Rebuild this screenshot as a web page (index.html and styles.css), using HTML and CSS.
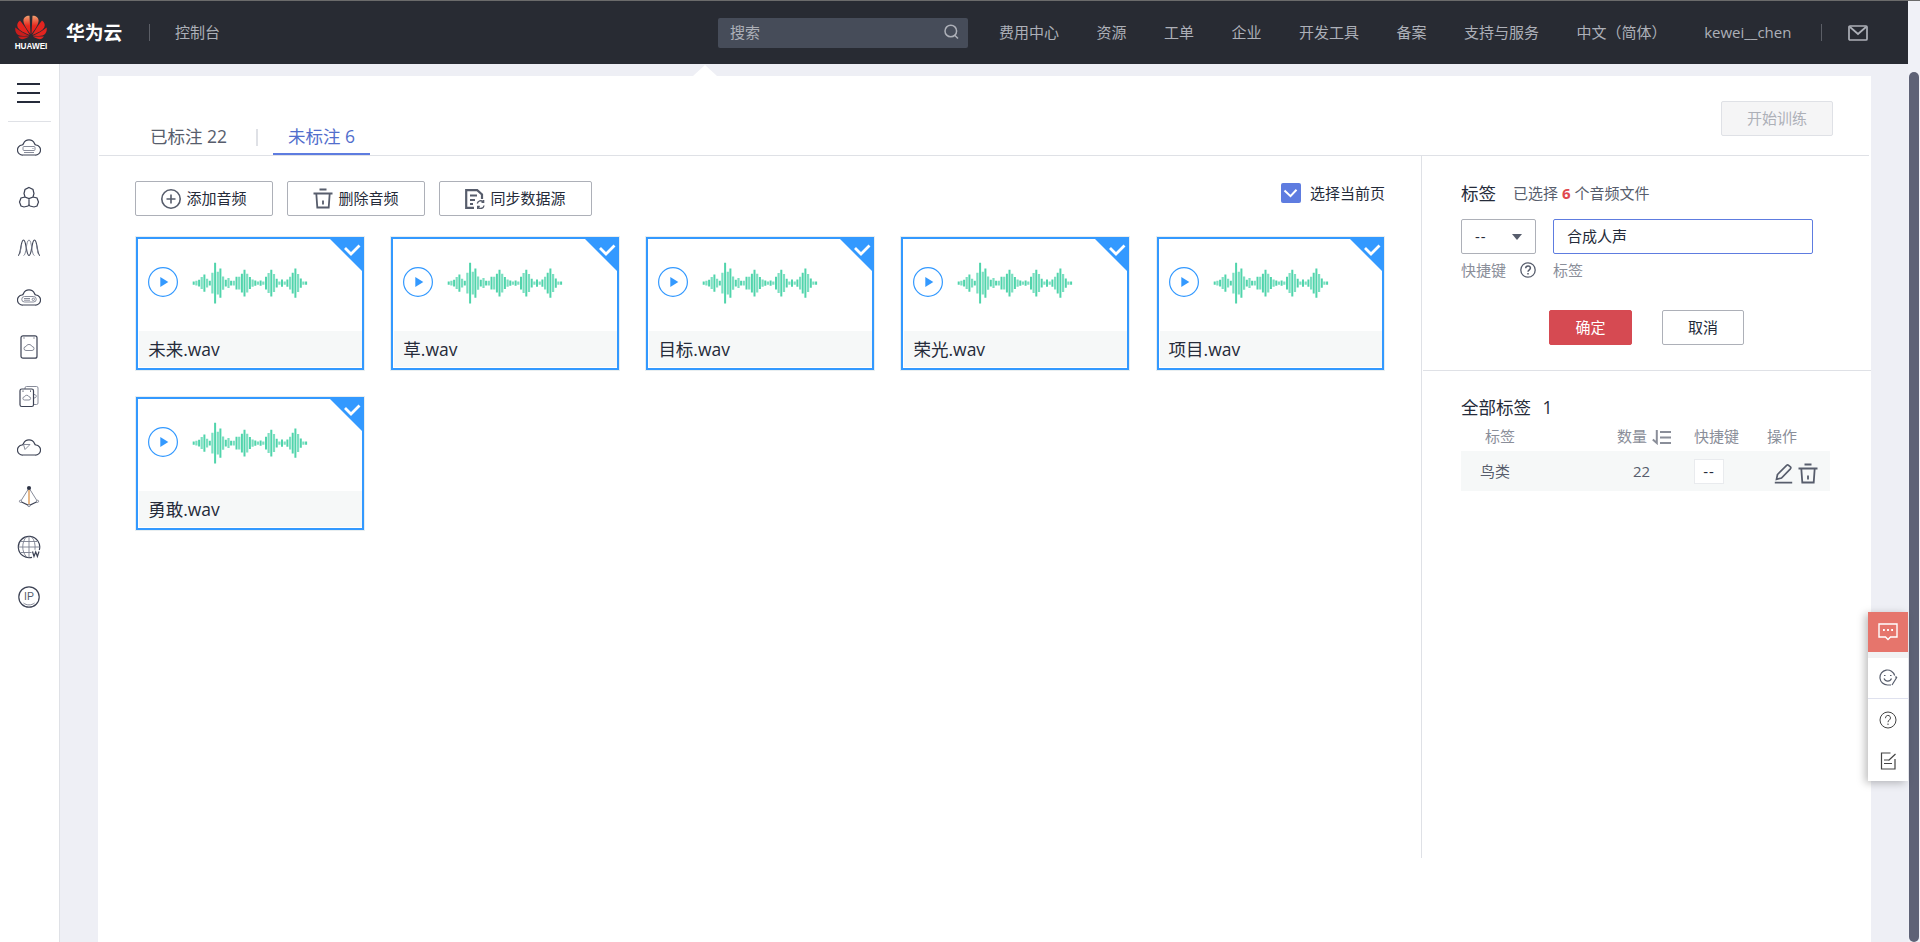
FILE: index.html
```html
<!DOCTYPE html>
<html lang="zh-CN">
<head>
    <meta charset="UTF-8">
    <meta name="viewport" content="width=device-width, initial-scale=1.0">
    <title>华为云 - 音频标注</title>
    <link rel="stylesheet" href="styles.css">
</head>
<body>

<!-- Shared icons -->
<svg class="defs" width="0" height="0">
    <symbol id="wave" viewBox="0 0 116 44">
        <path class="wave-light" d="M4.400 19.700v4.700M9.700 16v12M15.100 17.700v8.700M20.400 11.700v20.700M25.800 10.700v22.700M31.100 15.400v13.300M36.500 17v10M41.800 19.700v4.700M47.200 15.700v12.700M55.200 12.700v18.700M60.600 18.400v7.300M65.900 20.400v3.300M71.300 20.400v3.300M76.600 12v20M82 13v18M87.400 20.400v3.300M92.700 20.400v3.300M98.100 15.700v12.700M106.100 13v18M111.400 20.400v3.300"/>
        <path class="wave-dark" d="M1.700 20.400v3.300M7.100 18.700v6.700M12.400 13.400v17.300M17.800 19.700v4.700M23.100 1.700v40.700M28.400 7.400v29.300M33.800 18.700v6.700M39.100 19.700v4.700M44.500 15.700v12.700M49.900 12.700v18.700M52.500 8.700v26.700M57.900 16v12M63.300 19.400v5.300M68.600 19.400v5.300M74 15.700v12.700M79.300 8.700v26.700M84.700 17.700v8.700M90 18.400v7.300M95.400 18.400v7.300M100.700 11.700v20.700M103.400 7.400v29.300M108.800 17.400v9.300M114.100 20.400v3.300"/>
    </symbol>
    <symbol id="play" viewBox="0 0 30 30">
        <circle cx="15" cy="15" r="14.400" fill="none" stroke="#3399ff" stroke-width="1.200"/>
        <path d="M12.300 10v10l8-5z" fill="#3399ff"/>
    </symbol>
    <symbol id="check" viewBox="0 0 32 32">
        <path d="M0 0h32v32z" fill="#3399ff"/>
        <path d="M15 9l6 6 8.500-8.500" fill="none" stroke="#fff" stroke-width="2.800"/>
    </symbol>
    <symbol id="trash" viewBox="0 0 20 21">
        <path d="M6.500 1.500h7M.5 5.500h19M3.300 5.500l1 14h11.400l1-14M10 12.500v4" fill="none" stroke="#575d6c" stroke-width="1.800"/>
    </symbol>
</svg>

<div class="app">
    <div class="page">

        <!-- Top bar -->
        <header class="topbar">
            <div class="logo">
                <svg width="32" height="25" viewBox="0 0 32 25">
                    <defs>
                        <linearGradient id="petal" x1="0" y1="0" x2="0" y2="1">
                            <stop offset="0" stop-color="#f0a070"/>
                            <stop offset=".55" stop-color="#e8281e"/>
                            <stop offset="1" stop-color="#e31a18"/>
                        </linearGradient>
                    </defs>
                    <g fill="#e3241f">
                        <path fill="url(#petal)" d="M15.500 19C15 11 14.800 5 14.500.8 11.500.5 8.500 2.500 8.400 5.500c0 4 4 9.500 7.100 13.500z"/>
                        <path fill="url(#petal)" d="M16.500 19c.5-8 .7-14 1-18.200 3-.3 6 1.700 6.100 4.700 0 4-4 9.500-7.100 13.500z"/>
                        <path d="M14.800 20C11.500 14.500 8 9 5 5.500 2.400 7 1.600 10 2.800 12.500c1.600 3 7 5.500 12 7.500z"/>
                        <path d="M17.200 20c3.300-5.500 6.800-11 9.800-14.500 2.600 1.500 3.400 4.500 2.200 7-1.600 3-7 5.500-12 7.500z"/>
                        <path fill="#c91d1c" d="M14.300 20.800C9 18.500 4 15.500.4 12.500-.2 15.500.8 18.500 3.300 19.900c2.500 1.300 7 1.100 11 .9z"/>
                        <path d="M17.700 20.800c5.300-2.300 10.300-5.300 13.900-8.300.6 3-.4 6-2.900 7.400-2.500 1.300-7 1.100-11 .9z"/>
                        <path fill="#c91d1c" d="M14.200 21.600H3c1.500 2.300 4 3.100 6.300 2.200 1.700-.5 3.400-1.300 4.900-2.200z"/>
                        <path d="M17.800 21.600H29c-1.500 2.300-4 3.100-6.300 2.200-1.700-.5-3.400-1.300-4.900-2.200z"/>
                    </g>
                </svg>
                <span class="logo-text">HUAWEI</span>
            </div>
            <span class="brand">华为云</span>
            <span class="bar-divider"></span>
            <a class="console">控制台</a>
            <div class="search">
                <span>搜索</span>
                <svg width="15" height="16" viewBox="0 0 15 16" fill="none" stroke="#adb0b8" stroke-width="1.500">
                    <circle cx="6.800" cy="7" r="5.800"/>
                    <path d="M10.500 11l3.500 3.500"/>
                </svg>
            </div>
            <nav class="topnav">
                <a>费用中心</a>
                <a>资源</a>
                <a>工单</a>
                <a>企业</a>
                <a>开发工具</a>
                <a>备案</a>
                <a>支持与服务</a>
                <a>中文（简体）</a>
                <a>kewei__chen</a>
            </nav>
            <span class="bar-divider user-divider"></span>
            <svg class="mail" width="20" height="16" viewBox="0 0 20 16" fill="none" stroke="#adb0b8" stroke-width="1.700">
                <rect x="1" y="1" width="18" height="14" rx="1"/>
                <path d="M2 2l8 7 8-7"/>
            </svg>
        </header>

        <div class="body">
            <!-- Left service bar -->
            <aside class="sidebar">
                <div class="menu"><i></i><i></i><i></i></div>
                <ul>
                    <li><svg width="24" height="24" viewBox="0 0 24 24"><path d="M6 20a5 5 0 0 1-1-10c1 0 1.200-.5 1.500-1.500a6 6 0 0 1 11 0c.3 1 .5 1.500 1.500 1.500a5 5 0 0 1-1 10z"/><path class="thin" d="M7 11.500h10a1 1 0 0 1 1 1v2a1 1 0 0 1-1 1H7a1 1 0 0 1-1-1v-2a1 1 0 0 1 1-1zM7 17.500h10M15.500 13.500h1"/></svg></li>
                    <li><svg width="24" height="24" viewBox="0 0 24 24"><path d="M12 2.500l4 2 1 4-1 3.500-4 1.500L8 12 7 8.500l1-4zM8 12l-4 1-1.500 4 1.500 4 3 1 4-1 1-1.500M16 12l4 1 1.500 4-1.500 4-3 1-4-1-1-1.500v-6"/></svg></li>
                    <li><svg width="24" height="24" viewBox="0 0 24 24"><path d="M1 20.500C4 20.500 3.500 5 6.500 5S9 20.500 12 20.500M12 20.500C15 20.500 14.500 5 17.500 5S20 20.500 23 20.500"/><path class="thin" d="M3 18.500l1.500-9M6.500 20.500C9.500 20.500 9 5 12 5s2.500 15.500 5.500 15.500M21 18.500l-1.500-9"/></svg></li>
                    <li><svg width="24" height="24" viewBox="0 0 24 24"><path d="M6 20a5 5 0 0 1-1-10c1 0 1.200-.5 1.500-1.500a6 6 0 0 1 11 0c.3 1 .5 1.500 1.500 1.500a5 5 0 0 1-1 10z"/><path class="thin" d="M7.500 11.500h9a2.700 2.700 0 0 1 0 5.500h-9a2.700 2.700 0 0 1 0-5.500zM7 13.500h6M7 15.200h6"/><circle class="thin" cx="16.300" cy="14.300" r="1.200"/></svg></li>
                    <li><svg width="24" height="24" viewBox="0 0 24 24"><rect x="4" y=".8" width="16" height="22.400" rx="2"/><path class="thin" d="M9 15.500a2 2 0 0 1 0-4 3.200 3.200 0 0 1 6 0 2 2 0 0 1 0 4z"/><path d="M6.500 3h1M16.500 3h1"/></svg></li>
                    <li><svg width="24" height="24" viewBox="0 0 24 24"><path class="thin" d="M8 4V3a1.500 1.500 0 0 1 1.500-1.500h10A1.500 1.500 0 0 1 21 3v15a1.500 1.500 0 0 1-1.500 1.500H17M17 9.500c3 0 3 3.500 0 3.500"/><rect x="3" y="4" width="13.500" height="17.500" rx="1.800"/><path class="thin" d="M7.500 15a1.600 1.600 0 0 1 0-3.200 2.400 2.400 0 0 1 4.500 0 1.600 1.600 0 0 1 0 3.200z"/><path d="M5.500 6.200h1M13 6.200h1"/></svg></li>
                    <li><svg width="24" height="24" viewBox="0 0 24 24"><path d="M6 20a5 5 0 0 1-1-10c1 0 1.200-.5 1.500-1.500a6 6 0 0 1 11 0c.3 1 .5 1.500 1.500 1.500a5 5 0 0 1-1 10z"/><path class="thin" d="M6.500 9.500h6.500l-5 5z"/></svg></li>
                    <li><svg width="24" height="24" viewBox="0 0 24 24"><path class="thin" d="M12 3L3.500 16.500M12 3l8.500 13.500"/><path d="M3.500 16.500L12 20.500l8.500-4"/><path class="orange" d="M12 3v17"/><circle class="dot" cx="12" cy="3" r="1.500"/><circle class="thin white" cx="3.500" cy="16.300" r="1.100"/><circle class="thin white" cx="20.500" cy="16.300" r="1.100"/><circle class="thin white" cx="12" cy="20.600" r="1.100"/></svg></li>
                    <li><svg width="24" height="24" viewBox="0 0 24 24"><path d="M15 22.300A10.700 10.700 0 1 1 22.300 15"/><path class="thin" d="M12 1v21M1.500 12h21M3.500 6.500h16.500M3.500 17.500h11M9.500 1.800c-5 5-5 15 0 20M14.500 1.800c3 3 4 8 3.500 13"/><path d="M15.500 16.500l1.500 5 1.700-4.500 1.700 4.500 1.600-5"/></svg></li>
                    <li><svg width="24" height="24" viewBox="0 0 24 24"><circle cx="12" cy="12" r="10.200"/><path class="thin" d="M6.500 18c3 2.500 8 2.500 11 0"/><text x="12" y="15.400">IP</text></svg></li>
                </ul>
            </aside>

            <!-- Labeling page -->
            <main class="panel">
                <span class="pointer"></span>
                <div class="panel-head">
                    <div class="tabs">
                        <a class="tab">已标注 22</a>
                        <span class="tab-split"></span>
                        <a class="tab active">未标注 6</a>
                    </div>
                    <button class="btn btn-train" disabled>开始训练</button>
                </div>

                <div class="content">
                    <section class="audio">
                        <div class="toolbar">
                            <button class="btn btn-tool">
                                <svg width="20" height="20" viewBox="0 0 20 20" fill="none" stroke="#575d6c" stroke-width="1.600"><circle cx="10" cy="10" r="9.200"/><path d="M10 5.500v9M5.500 10h9"/></svg>
                                <span>添加音频</span>
                            </button>
                            <button class="btn btn-tool">
                                <svg width="20" height="21"><use href="#trash"/></svg>
                                <span>删除音频</span>
                            </button>
                            <button class="btn btn-tool btn-sync">
                                <svg width="20" height="20" viewBox="0 0 20 20" fill="none" stroke="#575d6c" stroke-width="2.200"><path d="M9 18.800H1.200V1.200h11L17 5.500V10M5 6.500h7M5 11h5M5 15h3"/><path stroke-width="1.400" d="M12.300 14.500a3.400 3.400 0 0 1 5.800-1.700M19 16.500a3.400 3.400 0 0 1-5.800 1.900M18.600 11v2.400h-2.100M12.700 19.900v-2.400h2.100"/></svg>
                                <span>同步数据源</span>
                            </button>
                            <label class="select-page">
                                <span class="checkbox"><svg width="20" height="20" viewBox="0 0 20 20"><path d="M3.500 7.500l6 5.700 6-6.500" fill="none" stroke="#fff" stroke-width="2"/></svg></span>
                                选择当前页
                            </label>
                        </div>

                        <div class="cards">
                            <div class="card">
                                <svg class="corner"><use href="#check"/></svg>
                                <div class="player"><svg class="play"><use href="#play"/></svg><svg class="wave"><use href="#wave"/></svg></div>
                                <p>未来.wav</p>
                            </div>
                            <div class="card">
                                <svg class="corner"><use href="#check"/></svg>
                                <div class="player"><svg class="play"><use href="#play"/></svg><svg class="wave"><use href="#wave"/></svg></div>
                                <p>草.wav</p>
                            </div>
                            <div class="card">
                                <svg class="corner"><use href="#check"/></svg>
                                <div class="player"><svg class="play"><use href="#play"/></svg><svg class="wave"><use href="#wave"/></svg></div>
                                <p>目标.wav</p>
                            </div>
                            <div class="card">
                                <svg class="corner"><use href="#check"/></svg>
                                <div class="player"><svg class="play"><use href="#play"/></svg><svg class="wave"><use href="#wave"/></svg></div>
                                <p>荣光.wav</p>
                            </div>
                            <div class="card">
                                <svg class="corner"><use href="#check"/></svg>
                                <div class="player"><svg class="play"><use href="#play"/></svg><svg class="wave"><use href="#wave"/></svg></div>
                                <p>项目.wav</p>
                            </div>
                            <div class="card">
                                <svg class="corner"><use href="#check"/></svg>
                                <div class="player"><svg class="play"><use href="#play"/></svg><svg class="wave"><use href="#wave"/></svg></div>
                                <p>勇敢.wav</p>
                            </div>
                        </div>
                    </section>

                    <!-- Label form and label list -->
                    <section class="labels">
                        <div class="label-form">
                            <div class="form-title">
                                <h3>标签</h3>
                                <span>已选择 <b>6</b> 个音频文件</span>
                            </div>
                            <div class="fields">
                                <div class="field-key">
                                    <div class="select"><span>--</span> <i></i></div>
                                    <div class="hint">快捷键
                                        <svg width="16" height="16" viewBox="0 0 16 16" fill="none" stroke="#575d6c" stroke-width="1.300"><circle cx="8" cy="8" r="7.200"/><path stroke-width="1.500" d="M5.700 6.300c0-3.200 4.700-3 4.700-.2C10.400 7.800 8 7.800 8 9.800M8 11v1.500"/></svg>
                                    </div>
                                </div>
                                <div class="field-name">
                                    <div class="input">合成人声</div>
                                    <div class="hint">标签</div>
                                </div>
                            </div>
                            <div class="actions">
                                <button class="btn btn-ok">确定</button>
                                <button class="btn btn-cancel">取消</button>
                            </div>
                        </div>

                        <div class="label-list">
                            <h3>全部标签 <span>1</span></h3>
                            <div class="row row-head">
                                <span class="c-name">标签</span>
                                <span class="c-count">数量
                                    <svg width="19" height="15" viewBox="0 0 19 15" fill="none" stroke="#8a8e99" stroke-width="2"><path d="M4.800 0v13L.8 9.500M8 2h11M8 7.500h11M8 13h11"/></svg>
                                </span>
                                <span class="c-key">快捷键</span>
                                <span class="c-op">操作</span>
                            </div>
                            <div class="row row-item">
                                <span class="c-name">鸟类</span>
                                <span class="c-count">22</span>
                                <span class="c-key"><em>--</em></span>
                                <span class="c-op">
                                    <svg width="19" height="21" viewBox="0 0 19 21" fill="none" stroke="#575d6c" stroke-width="1.700"><path d="M.8 19.700h17.400M3.500 11.500L12.600 2.300q1-.8 2 0l1.800 1.500q.9 1 0 2L7.500 15l-5 1.300z"/></svg>
                                    <svg width="20" height="21"><use href="#trash"/></svg>
                                </span>
                            </div>
                        </div>
                    </section>
                </div>
            </main>
        </div>
    </div>

    <!-- Scrollbar -->
    <div class="scrollbar"><div class="thumb"></div></div>
</div>

<!-- Floating help -->
<div class="float-help">
    <div class="chat">
        <svg width="20" height="18" viewBox="0 0 20 18" fill="none" stroke="#fff" stroke-width="1.400"><path d="M1 1h18v13h-6.500L10 16.500 7.500 14H1z"/><path stroke-width="1.800" d="M5 7h1.800M9.100 7h1.800M13.200 7H15"/></svg>
    </div>
    <div class="smile">
        <svg width="19" height="18" viewBox="0 0 19 18" fill="none" stroke="#575d6c" stroke-width="1.200"><path d="M12 16H8.500A7.500 7.500 0 1 1 15.700 6.500M18 8l-5 8M16 8h2M5 9.500c1.500 3.500 6 3.500 7.500 0M5 6.500h1.500M11 6.500h1.500"/></svg>
    </div>
    <div class="tip">
        <svg width="18" height="18" viewBox="0 0 18 18" fill="none" stroke="#444" stroke-width="1"><circle cx="9" cy="9" r="8"/><path d="M6.500 7.200c0-3.800 5-3.500 5-.3C11.500 9 9 9 9 11.200M9 12.500V14"/></svg>
    </div>
    <div class="tip">
        <svg width="17" height="18" viewBox="0 0 17 18" fill="none" stroke="#444" stroke-width="1.200"><path d="M10.500 1H1.500v16h13.500V7M4 8h4.500M4 11.500h8M8.500 8.500L15.500 2"/></svg>
    </div>
</div>

</body>
</html>
```
FILE: styles.css
```css
* {
    box-sizing: border-box;
}

body {
    font-family: 'Open Sans', 'Noto Sans CJK SC', sans-serif;
    font-size: 15px;
    font-weight: 380;
    line-height: 20px;
    background-color: #eeeff5;
    color: #252b3a;
    margin: 0;
    overflow: hidden;
}

h3, p, ul {
    margin: 0;
    padding: 0;
    font-weight: inherit;
}

svg {
    flex: none;
    display: block;
}

.defs {
    position: absolute;
}

.app {
    display: flex;
    height: 942px;
    border-top: 1px solid #6b6b6b;
}

.page {
    flex: 1;
    display: flex;
    flex-direction: column;
}

/* Top bar */
.topbar {
    height: 63px;
    background-color: #282b33;
    color: #adb0b8;
    display: flex;
    align-items: center;
    padding-left: 15px;
    flex: none;
}

.logo {
    width: 32px;
    height: 36px;
    display: flex;
    flex-direction: column;
    align-items: center;
}

.logo-text {
    font: bold 8.2px/9px 'Liberation Sans', sans-serif;
    color: #fff;
    margin-top: 2px;
}

.brand {
    font-size: 18.75px;
    font-weight: bold;
    color: #fff;
    margin-left: 19px;
    width: 57px;
}

.bar-divider {
    width: 1px;
    height: 17px;
    background-color: #5b5e66;
    margin-left: 26px;
}

.console {
    margin-left: 25px;
    width: 45px;
    padding-bottom: 2px;
}

.search {
    width: 250px;
    height: 30px;
    margin-left: 498px;
    background-color: #464c59;
    border-radius: 2px;
    padding: 0 9px 2px 12px;
    display: flex;
    align-items: center;
    justify-content: space-between;
}

.topnav {
    display: flex;
    gap: 37.5px;
    margin-left: 31px;
    padding-bottom: 2px;
    width: 790px;
    white-space: nowrap;
}

.user-divider {
    margin-left: 32px;
}

.mail {
    margin-left: 26px;
}

.body {
    flex: 1;
    display: flex;
    min-height: 0;
}

/* Service bar */
.sidebar {
    width: 60px;
    background-color: #fff;
    border-right: 1px solid #dfe1e6;
    padding: 19px 8px 0;
}

.menu {
    height: 39px;
    padding-left: 9px;
    border-bottom: 1px solid #dfe1e6;
    display: flex;
    flex-direction: column;
    gap: 7px;
}

.menu i {
    width: 23px;
    height: 2px;
    background-color: #252b3a;
}

.sidebar ul {
    list-style: none;
    padding-top: 13px;
}

.sidebar li {
    height: 50px;
    padding-left: 9px;
}

.sidebar li svg {
    fill: none;
    stroke: #3c4254;
    stroke-width: 1.2;
}

.sidebar .thin {
    stroke: #7a7f8e;
    stroke-width: 0.9;
}

.sidebar .white {
    fill: #fff;
}

.sidebar .dot {
    fill: #252b3a;
}

.sidebar .orange {
    stroke: #d98a3a;
    stroke-width: 1.2;
}

.sidebar text {
    font: 10.5px 'Liberation Sans', sans-serif;
    text-anchor: middle;
    fill: #575d6c;
    stroke: none;
}

/* Main panel */
.panel {
    position: relative;
    width: 1773px;
    margin: 12px 0 0 38px;
    background-color: #fff;
}

.pointer {
    position: absolute;
    left: 595px;
    top: -11px;
    border: 12px solid transparent;
    border-top: 0;
    border-bottom: 11px solid #fff;
}

.panel-head {
    height: 80px;
    margin: 0 2px 0 1px;
    border-bottom: 1px solid #dfe1e6;
    display: flex;
    justify-content: space-between;
    align-items: flex-end;
    padding: 0 36px 0 51px;
}

.tabs {
    display: flex;
    font-size: 17.5px;
}

.tab {
    width: 78px;
    height: 29px;
    line-height: 20px;
    color: #575d6c;
    white-space: nowrap;
}

.tab-split {
    width: 2px;
    height: 17px;
    background-color: #dfe1e6;
    margin: 3px 15px 0 28px;
}

.tab.active {
    color: #526ecc;
    width: 97px;
    padding-left: 15px;
    border-bottom: 2px solid #5e7ce0;
}

.btn {
    height: 35px;
    border: 1px solid #adb0b8;
    border-radius: 2px;
    background-color: #fff;
    font-family: inherit;
    font-size: 15px;
    font-weight: inherit;
    color: #252b3a;
    padding: 0 0 2px;
    display: flex;
    align-items: center;
    justify-content: center;
}

.btn-train {
    width: 112px;
    background-color: #f5f5f6;
    border-color: #dfe1e6;
    color: #adb0b8;
    margin-bottom: 19px;
}

.content {
    display: flex;
}

/* Audio list */
.audio {
    width: 1323px;
    padding: 25px 0 0 37px;
}

.toolbar {
    display: flex;
    gap: 14px;
}

.btn-tool {
    width: 138px;
    gap: 5px;
    padding: 0;
}

.btn-tool span {
    padding-bottom: 2px;
}

.btn-sync {
    width: 153px;
}

.select-page {
    display: flex;
    gap: 9px;
    margin: 2px 36px 0 auto;
}

.checkbox {
    width: 20px;
    height: 20px;
    border-radius: 2px;
    background-color: #5e7ce0;
}

.cards {
    display: grid;
    grid-template-columns: repeat(5, 227.6px);
    gap: 27px 27.5px;
    padding: 21px 0 0 1.2px;
}

.card {
    position: relative;
    height: 133px;
    border: 2px solid #3399ff;
    outline: 1px solid #e8eef0;
    display: flex;
    flex-direction: column;
    justify-content: space-between;
    padding-bottom: 1px;
}

.corner {
    position: absolute;
    top: 0;
    right: 0;
    width: 32px;
    height: 32px;
}

.player {
    display: flex;
    align-items: center;
    gap: 14px;
    padding: 19px 0 0 10px;
}

.play {
    width: 30px;
    height: 30px;
}

.wave {
    width: 116px;
    height: 44px;
    margin-top: 3px;
}

.wave-light,
.wave-dark {
    fill: none;
    stroke-width: 2;
    stroke: #50d4ab;
}

.wave-light {
    stroke-width: 2.2;
    stroke: #7bdfc1;
}

.card p {
    height: 36px;
    margin-left: 1px;
    padding-left: 9px;
    background-color: #f6f8f8;
    font-size: 17.5px;
    line-height: 36px;
}

/* Labels */
.labels {
    width: 450px;
    height: 702px;
    border-left: 1px solid #dfe1e6;
    padding-left: 1px;
}

.label-form {
    height: 215px;
    padding: 26px 0 0 38px;
    border-bottom: 1px solid #dfe1e6;
}

.form-title {
    display: flex;
    gap: 17px;
    line-height: 22px;
    color: #575d6c;
}

h3 {
    font-size: 17.5px;
    line-height: 22px;
    color: #252b3a;
}

.form-title b {
    font-weight: 700;
    color: #e0484f;
}

.fields {
    display: flex;
    gap: 17px;
    margin-top: 15px;
}

.field-key {
    width: 75px;
}

.field-name {
    width: 260px;
}

.select,
.input {
    height: 35px;
    line-height: 32px;
    border: 1px solid #adb0b8;
    border-radius: 2px;
    padding: 0 13px;
}

.select {
    display: flex;
    justify-content: space-between;
    align-items: center;
}

.select span,
.row-item em {
    letter-spacing: 1px;
}

.select span {
    padding-bottom: 2px;
}

.select i {
    border: 5px solid transparent;
    border-top: 6px solid #575d6c;
    border-bottom: 0;
}

.input {
    border-color: #5e7ce0;
}

.hint {
    display: flex;
    justify-content: space-between;
    align-items: center;
    margin-top: 6px;
    color: #8a8e99;
}

.actions {
    display: flex;
    gap: 30px;
    margin: 30px 0 0 88px;
}

.btn-ok {
    width: 83px;
    background-color: #d64a52;
    border-color: #d64a52;
    color: #fff;
}

.btn-cancel {
    width: 82px;
}

.label-list {
    padding: 25px 0 0 38px;
}

.label-list h3 span {
    margin-left: 7px;
}

.row {
    display: grid;
    grid-template-columns: 156px 77px 73px 62px;
    width: 369px;
    align-items: center;
}

.row-head {
    height: 33px;
    padding-top: 3px;
    color: #8a8e99;
}

.row-head .c-name {
    padding-left: 24px;
}

.row-head .c-count {
    display: flex;
    align-items: center;
    gap: 5px;
}

.row-head .c-count svg {
    margin-top: 3px;
}

.row-item {
    height: 40px;
    background-color: #f6f8f8;
    color: #575d6c;
}

.row-item .c-name {
    padding-left: 19px;
}

.row-item .c-count {
    padding-left: 16px;
}

.row-item em {
    display: block;
    width: 30px;
    height: 25px;
    line-height: 22px;
    font-style: normal;
    text-align: center;
    background-color: #fff;
    border: 1px solid #e9ebee;
    color: #252b3a;
}

.row-item .c-op {
    display: flex;
    gap: 5px;
    padding: 4px 0 0 7px;
}

/* Scrollbar */
.scrollbar {
    width: 12px;
    padding: 71px 1px 0;
    background-color: #f0f1f7;
}

.thumb {
    height: 870px;
    border-radius: 5px;
    background-color: #5e6276;
}

/* Floating help */
.float-help {
    position: absolute;
    left: 1868px;
    top: 612px;
    width: 40px;
    background-color: #fff;
    box-shadow: -3px 2px 8px rgba(0, 0, 0, 0.25);
}

.float-help div {
    height: 40px;
    display: flex;
    align-items: center;
    justify-content: center;
}

.float-help .chat {
    background-color: #e6756c;
}

.float-help .smile {
    height: 47px;
    border-top: 6px solid #f2f2f3;
    border-bottom: 1px solid #dfe1ee;
}

.float-help .tip {
    height: 41px;
}
```
